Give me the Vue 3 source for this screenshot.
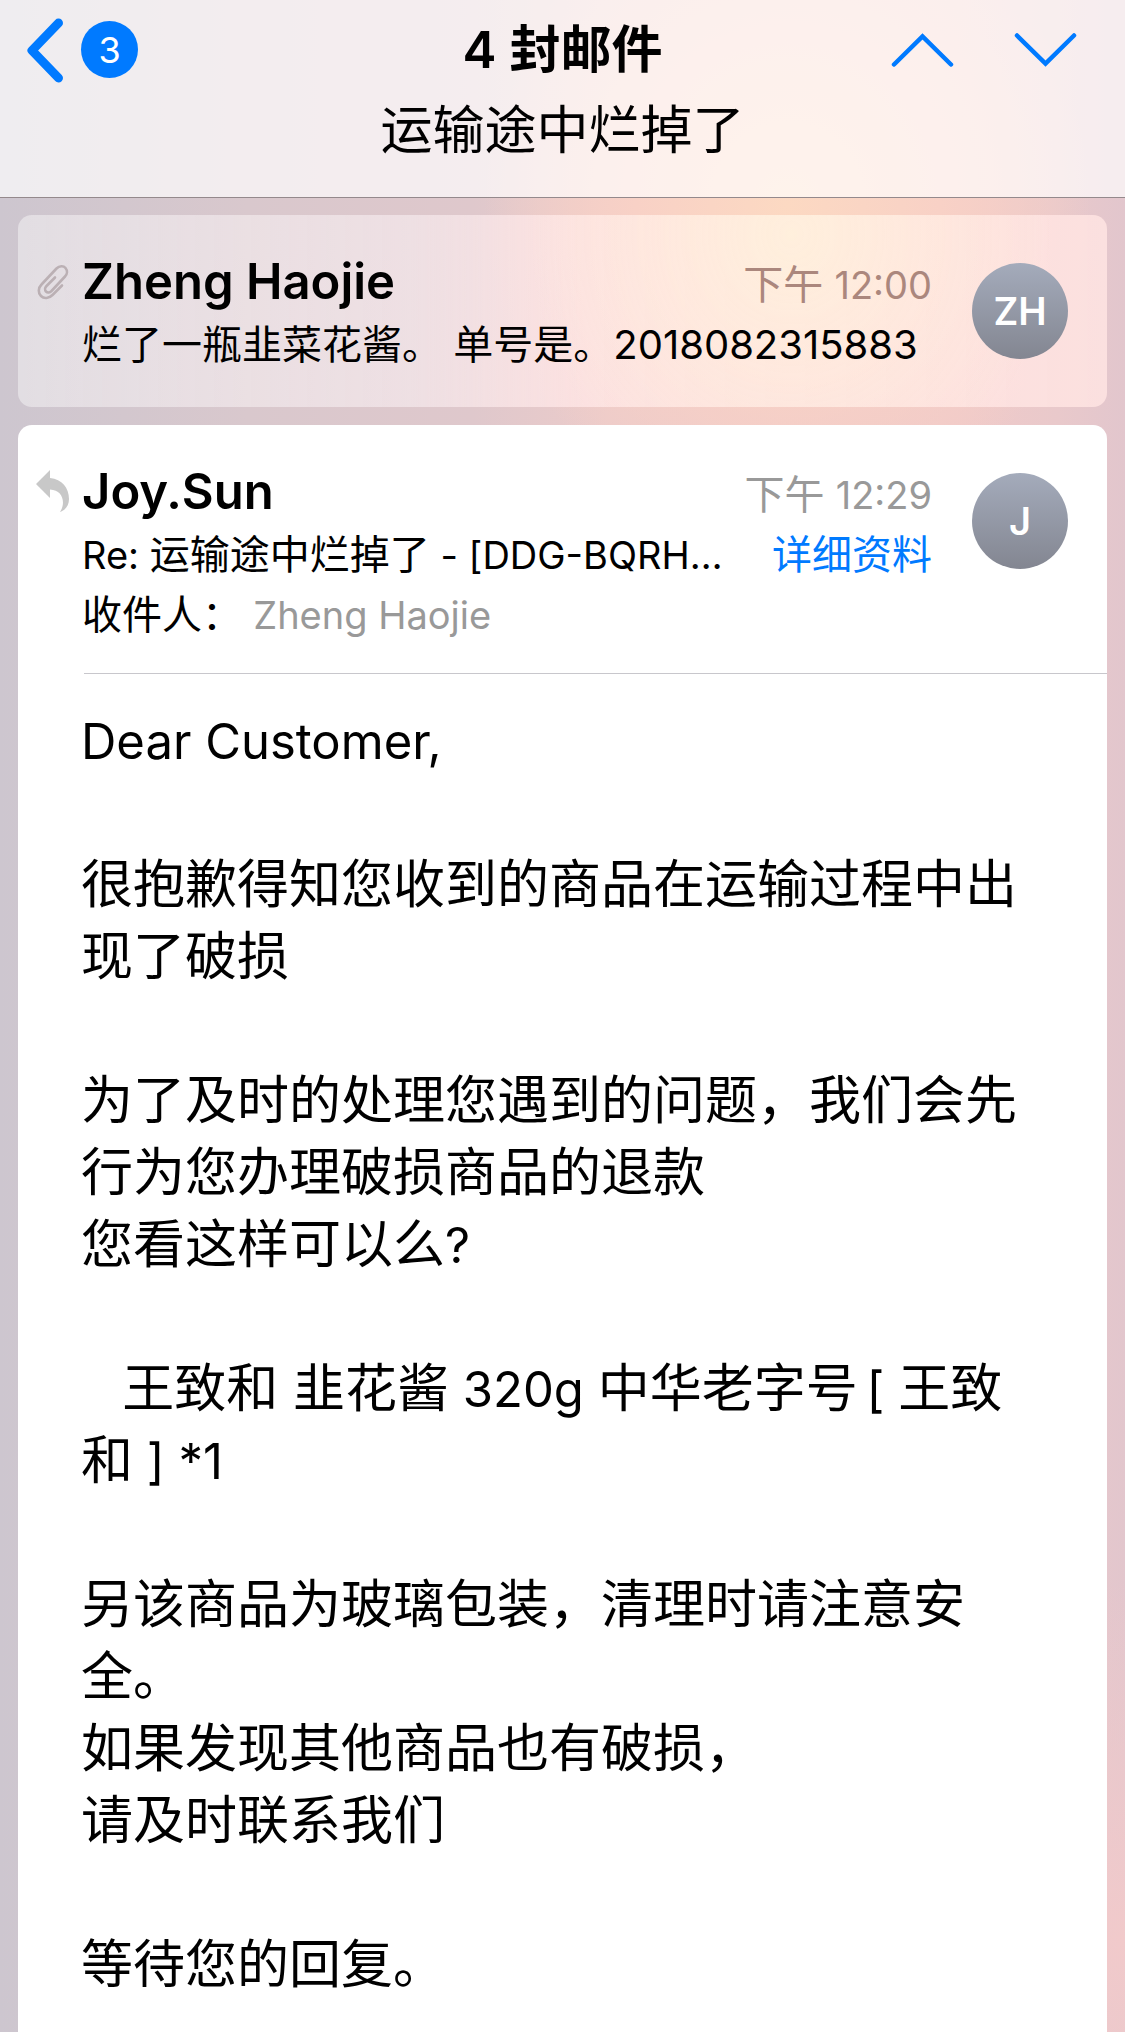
<script setup>
const messages = [
  {
    id: 1,
    sender: 'Zheng Haojie',
    time: '12:00',
    initials: 'ZH',
  },
  {
    id: 2,
    sender: 'Joy.Sun',
    time: '12:29',
    initials: 'J',
  },
]
const [first, reply] = messages
</script>

<template>
  <div class="page">
    <header class="nav">
      <div class="nav-row">
        <button class="back" type="button" aria-label="返回">
          <svg width="38" height="70" viewBox="0 0 38 70" fill="none" stroke="currentColor" stroke-width="9" stroke-linecap="round" stroke-linejoin="round">
            <path d="M31.500 8L5 35.500L31.500 63" />
          </svg>
          <span class="badge">3</span>
        </button>
        <h1 class="title">4 封邮件</h1>
        <div class="arrows">
          <button type="button" aria-label="上一封">
            <svg width="63" height="36" viewBox="0 0 63 36" fill="none" stroke="currentColor" stroke-width="4.500" stroke-linecap="round">
              <path d="M3 32.500L31.500 4.500L60 32.500" />
            </svg>
          </button>
          <button type="button" aria-label="下一封">
            <svg width="63" height="36" viewBox="0 0 63 36" fill="none" stroke="currentColor" stroke-width="4.500" stroke-linecap="round">
              <path d="M3 3.500L31.500 31.500L60 3.500" />
            </svg>
          </button>
        </div>
      </div>
      <p class="subtitle">运输途中烂掉了</p>
    </header>

    <main class="thread">
      <article class="card card-dim">
        <div class="head">
          <svg class="mark clip" width="34" height="36" viewBox="-2 -1 34 36" fill="none" stroke="currentColor" stroke-width="2.600" stroke-linecap="round">
            <path d="M24 20.500L14.500 30C11 33.500 6 34 3 31S0 23 3.500 19.500L18.500 3.500C21.500 0.500 25.500 0.500 27.500 3S29.500 9 27 11.500L13.500 26C12 27.500 9.500 28 8 26.500S7 22.500 8.500 21L17 12.500" />
          </svg>
          <div class="info">
            <div class="line">
              <h2 class="sender">{{ first.sender }}</h2>
              <time class="time">下午 <span class="latin">{{ first.time }}</span></time>
            </div>
            <p class="text">烂了一瓶韭菜花酱。 单号是。2018082315883</p>
          </div>
          <div class="avatar">{{ first.initials }}</div>
        </div>
      </article>

      <article class="card card-open">
        <div class="head">
          <svg class="mark" width="34" height="43" viewBox="0 0 34 43" fill="currentColor">
            <path d="M0 14L14 0V8C26 9 33 18 33 29C33 35 30 40 24 42C30 33 27 20 14 19.500V28Z" />
          </svg>
          <div class="info">
            <div class="line">
              <h2 class="sender">{{ reply.sender }}</h2>
              <time class="time">下午 <span class="latin">{{ reply.time }}</span></time>
            </div>
            <div class="line line-subject">
              <p class="text"><span class="latin">Re: </span>运输途中烂掉了<span class="latin"> - [DDG-BQRH…</span></p>
              <a class="detail" href="#">详细资料</a>
            </div>
            <p class="text">收件人： <span class="latin recipient">Zheng Haojie</span></p>
          </div>
          <div class="avatar">{{ reply.initials }}</div>
        </div>

        <hr class="rule">

        <div class="body">
          <p><span class="latin">Dear Customer,</span></p>
          <p>很抱歉得知您收到的商品在运输过程中出现了破损</p>
          <p>为了及时的处理您遇到的问题，我们会先行为您办理破损商品的退款<br>您看这样可以么<span class="latin">?</span></p>
          <p><span class="latin">&nbsp;&nbsp; </span>王致和 韭花酱<span class="latin"> 320g </span>中华老字号<span class="latin">&thinsp;[ </span>王致和<span class="latin"> ] *1</span></p>
          <p>另该商品为玻璃包装，清理时请注意安全。<br>如果发现其他商品也有破损，<br>请及时联系我们</p>
          <p>等待您的回复。</p>
        </div>
      </article>
    </main>
  </div>
</template>

<style>
body {
  margin: 0;
}
</style>

<style scoped>
.page {
  display: flex;
  flex-direction: column;
  min-height: 100vh;
  font-family: Inter, "Noto Sans CJK SC", sans-serif;
  color: #000;
  background:
    radial-gradient(ellipse 27% 330px at 70% 205px, #fcd9c2 0%, #f8d1c6 50%, rgba(242, 204, 202, 0) 100%),
    radial-gradient(ellipse 40% 360px at 100% 1940px, #f1cacb 0%, rgba(228, 197, 206, 0) 100%),
    linear-gradient(90deg, #cdc6cf 0%, #d9c8cd 22%, #dfc8cc 42%, #eccbca 54%, #f0cac9 85%, #e9c9cb 94%, #e2c6cd 100%);
}

h1,
h2,
p {
  margin: 0;
  font-weight: 400;
}

button {
  display: flex;
  align-items: center;
  padding: 0;
  border: 0;
  background: none;
  color: #007aff;
  font: inherit;
}

.nav {
  padding: 9px 27px 25px;
  background: rgba(255, 255, 255, 0.68);
  border-bottom: 1px solid #94898c;
}

.nav-row {
  display: grid;
  grid-template-columns: 1fr auto 1fr;
  align-items: center;
  height: 81px;
}

.back {
  justify-self: start;
  gap: 16px;
}

.badge {
  display: flex;
  align-items: center;
  justify-content: center;
  width: 57px;
  height: 57px;
  border-radius: 50%;
  background: #007aff;
  color: #fff;
  font-size: 36px;
}

.title {
  font-size: 51px;
  font-weight: 600;
  line-height: 80px;
}

.arrows {
  display: flex;
  justify-self: end;
  gap: 60px;
  margin-right: 21px;
}

.subtitle {
  font-size: 52px;
  line-height: 82px;
  text-align: center;
}

.thread {
  display: flex;
  flex: 1;
  flex-direction: column;
  gap: 18px;
  padding: 17px 18px 0;
}

.card-dim {
  border-radius: 14px;
  background:
    radial-gradient(ellipse 24% 150% at 71% 10%, rgba(255, 240, 220, 0.9) 0%, rgba(255, 236, 220, 0) 100%),
    linear-gradient(90deg, rgba(255, 255, 255, 0.42) 0%, rgba(255, 247, 250, 0.5) 36%, rgba(255, 230, 230, 0.8) 52%, rgba(255, 228, 226, 0.85) 100%);
}

.card-open {
  flex: 1;
  border-radius: 14px 14px 0 0;
  background: #fff;
}

.head {
  display: flex;
  align-items: flex-start;
  padding: 36px 39px 32px 18px;
}

.card-open .head {
  padding-bottom: 28px;
}

.mark {
  flex: none;
  margin: 9px 12px 0 0;
  color: #c8c8c8;
}

.clip {
  margin-top: 13px;
  color: #bbb0b4;
}

.info {
  flex: 1;
  min-width: 0;
}

.line {
  display: flex;
  align-items: baseline;
  justify-content: space-between;
  height: 60px;
  margin-bottom: 4px;
}

.line-subject {
  margin-bottom: 0;
}

.sender {
  font-size: 49px;
  font-weight: 600;
  line-height: 62px;
}

.time,
.text,
.detail {
  font-size: 40px;
  line-height: 60px;
  white-space: nowrap;
}

.time {
  color: #999;
}

.card-dim .time {
  color: #ab877d;
}

.detail {
  color: #007aff;
  text-decoration: none;
}

.text .latin,
.time .latin {
  font-size: 38px;
  line-height: 1;
}

.text .recipient {
  color: #999;
}

.avatar {
  display: flex;
  flex: none;
  align-items: center;
  justify-content: center;
  width: 96px;
  height: 96px;
  margin: 12px 0 0 40px;
  border-radius: 50%;
  background: linear-gradient(#a4abbb, #838691);
  color: #fff;
  font-size: 38px;
  font-weight: 600;
}

.rule {
  height: 1px;
  margin: 0 0 0 66px;
  border: 0;
  background: #c8c7cc;
}

.body {
  padding: 31px 70px 31px 63px;
  font-size: 52px;
  line-height: 72px;
}

.body p + p {
  margin-top: 72px;
}

.body .latin {
  font-size: 49px;
  line-height: 1;
}
</style>
